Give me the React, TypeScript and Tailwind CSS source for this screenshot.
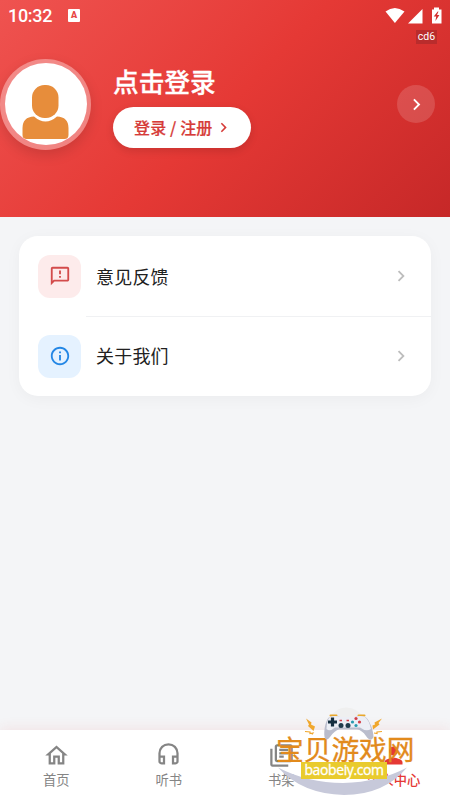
import { useState } from 'react';
import {
  MdChevronRight,
  MdInfoOutline,
  MdOutlineFeedback,
  MdOutlineHeadset,
  MdOutlineHome,
  MdOutlineLibraryBooks,
  MdPerson,
} from 'react-icons/md';

type Tab = '首页' | '听书' | '书架' | '个人中心';

const StatusBar = () => (
  <div className="flex h-8 items-center pl-2 pr-2 font-['Roboto',sans-serif] text-white">
    <span className="text-[18px] leading-none tracking-[-0.3px] font-medium">10:32</span>
    <span className="ml-[16px] mb-[1px] flex h-[13px] w-3 items-center justify-center rounded-[1px] bg-white text-[9px] leading-none font-black text-[#e84545]">
      A
    </span>
    <svg className="ml-auto mb-[3px]" width="57" height="18" viewBox="0 0 57 18" fill="white">
      <path d="M0.500 5.500 Q9.700 -1.500 19.500 5.500 L9.900 17 Z" />
      <path d="M37.500 3V17.500H23Z" />
      <path d="M49 1.500h5v2h2.500v14h-9.500v-14H49Z" />
      <path d="M52.700 5.500l-4 5h2.500l-.8 4.500 4-6h-2.400l1.500-3.500Z" fill="#d32f2f" />
    </svg>
  </div>
);

const Avatar = () => (
  <div className="h-[91px] w-[91px] shrink-0 rounded-full bg-white/35 p-[4.500px] shadow-[0_5px_13px_rgba(0,0,0,0.13)]">
    <div className="h-full w-full overflow-hidden rounded-full bg-white">
      <svg width="82" height="82" viewBox="0 0 82 82" fill="#e78d3b">
        <rect x="27" y="22" width="26.500" height="33" rx="12.500" />
        <path d="M29 53.500Q40.500 63.500 52 53.500Q63.500 54 63.500 65V72Q63.500 76 59.500 76H21.500Q17.500 76 17.500 72V65Q17.500 54 29 53.500Z" />
      </svg>
    </div>
  </div>
);

const Header = () => (
  <header className="h-[217px] bg-[linear-gradient(135deg,#ef5350_0%,#e53935_50%,#c62828_100%)]">
    <StatusBar />
    <div className="flex h-[144px] items-center">
      <Avatar />
      <div className="ml-[22px] mt-[9px] h-[91px]">
        <h1 className="text-[25.700px] leading-[36px] font-medium text-white [-webkit-text-stroke:0.3px_white]">
          点击登录
        </h1>
        <button className="mt-[8px] flex h-[41px] w-[138px] items-center rounded-full bg-white pl-[21px] text-[16px] font-medium text-[#d63b38] shadow-[0_3px_8px_rgba(0,0,0,0.12)] [-webkit-text-stroke:0.2px_#d63b38]">
          <span className="-mt-px whitespace-pre tracking-[0.15px]">登录 / 注册</span>
          <MdChevronRight size={19} className="ml-[1px]" />
        </button>
      </div>
      <button className="ml-auto mr-[15px] flex h-[38px] w-[38px] items-center justify-center rounded-full bg-white/15 text-white">
        <MdChevronRight size={23} />
      </button>
    </div>
  </header>
);

const Menu = () => (
  <div className="mx-[19px] mt-[19px] h-[160px] rounded-[19px] bg-white shadow-[0_3px_16px_rgba(0,0,0,0.04)]">
    <div className="flex h-20 items-center pl-[19px] pr-[19px]">
      <span className="flex h-[43px] w-[43px] items-center justify-center rounded-[12px] bg-[#fdebeb] text-[#d34b4b]">
        <MdOutlineFeedback size={22} />
      </span>
      <span className="ml-[15px] text-[18px] tracking-[0.2px] text-[#212121]">意见反馈</span>
      <MdChevronRight size={22} className="ml-auto text-[#bdbdbd]" />
    </div>
    <div className="ml-[67px] -mb-px h-px bg-[#f0f1f3]" />
    <div className="flex h-20 items-center pl-[19px] pr-[19px]">
      <span className="flex h-[43px] w-[43px] items-center justify-center rounded-[12px] bg-[#e5f2ff] text-[#2487e5]">
        <MdInfoOutline size={22} />
      </span>
      <span className="-mt-px ml-[15px] text-[18px] tracking-[0.2px] text-[#212121]">关于我们</span>
      <MdChevronRight size={22} className="ml-auto text-[#bdbdbd]" />
    </div>
  </div>
);

// Site logo that floats over the tab bar
const SiteLogo = () => (
  <div className="pointer-events-none absolute left-[270px] top-[700px] h-[100px] w-[155px]">
    <div className="absolute left-[6px] top-[31px] whitespace-nowrap text-[27.700px] leading-[34px] text-[#e28a1c] [-webkit-text-stroke:0.3px_#e28a1c]">
      宝贝游戏网
    </div>
    <svg className="absolute inset-0" width="155" height="100" viewBox="0 0 155 100">
      <path d="M60 18Q65 8 76 7.500Q88 8 94 18Z" fill="#efefef" />
      {/* smile */}
      <path d="M8 67.500Q38 83 73 83Q110 82 137 67.500Q114 95 74 95Q32 94 8 67.500Z" fill="#c7c9da" />
      {/* gamepad */}
      <path d="M60.500 15.500h6M88.500 15.500h6" stroke="#e9a82c" strokeWidth="2" strokeLinecap="round" />
      <path
        d="M60 17Q65 15 70 17H85Q90 15 95 17C99 18 104 32 103.500 37Q101 43 96 36Q92 30 87 29.500H69Q65 30 60 37Q56 42 54.500 37C53.500 30 56 18 60 17Z"
        fill="#babdcc"
      />
      <path
        d="M60 17Q65 15 70 17H85Q90 15 95 17Q99 20 101 29Q96 32 90 27.500H65Q60 32 56.500 29Q57 19 60 17Z"
        fill="#eceef5"
      />
      <path d="M62.500 17.500v9M58 22h9" stroke="#152f40" strokeWidth="3.200" />
      <circle cx="71" cy="25.500" r="2.500" fill="#203b4c" />
      <circle cx="78" cy="25.500" r="2.500" fill="#203b4c" />
      <path d="M69.500 20.500h2.500M76.500 20.500h2.500" stroke="#d33f48" strokeWidth="1.300" />
      <circle cx="86" cy="18.500" r="1.600" fill="#d33f48" />
      <circle cx="86" cy="25.500" r="1.600" fill="#299baf" />
      <circle cx="82.500" cy="22" r="1.600" fill="#299baf" />
      <circle cx="89.500" cy="22" r="1.600" fill="#d33f48" />
      {/* sparks */}
      <path d="M36 18.500l5.500 4-.5 2 4 2-1.500 4.500-5.500-5 1-1.500Z" fill="#f0a72d" />
      <path d="M112 18.500l-7.500 4 .5 2-2.500 1 .5 4 6.500-5-1-1.500Z" fill="#f0a72d" />
      <path d="M35 31.500l5 .5v1.500l3-.5-1 1.500" fill="none" stroke="#f0a72d" strokeWidth="1.200" />
      <path d="M112 31.500l-5 .5v1.500l-3-.5" fill="none" stroke="#f0a72d" strokeWidth="1.200" />
    </svg>
    <div className="absolute left-[31px] top-[62px] flex h-[16.500px] w-[86px] items-center justify-center bg-[#e9cb2e] font-['Open_Sans',sans-serif] text-[14px] leading-none font-medium tracking-[-0.4px] text-white [-webkit-text-stroke:0.3px_white]">
      baobeiy.com
    </div>
  </div>
);

const App = () => {
  const [activeTab, setActiveTab] = useState<Tab>('个人中心');

  const tabs = [
    { name: '首页' as Tab, Icon: MdOutlineHome },
    { name: '听书' as Tab, Icon: MdOutlineHeadset },
    { name: '书架' as Tab, Icon: MdOutlineLibraryBooks },
    { name: '个人中心' as Tab, Icon: MdPerson },
  ];

  return (
    <div className="relative flex h-[800px] w-[450px] flex-col overflow-hidden bg-[#f4f5f7] font-['Noto_Sans_CJK_SC',sans-serif]">
      <Header />
      <Menu />
      <nav className="mt-auto flex h-[70px] bg-white shadow-[0_-2px_12px_rgba(229,57,53,0.09)]">
        {tabs.map(({ name, Icon }) => (
          <button
            key={name}
            onClick={() => setActiveTab(name)}
            className={`flex flex-1 flex-col items-center pt-3 text-[13.300px] leading-[21px] ${
              activeTab === name ? 'font-medium text-[#e53935]' : 'text-[#858585]'
            }`}
          >
            <Icon size={27} />
            {name}
          </button>
        ))}
      </nav>
      <span className="absolute right-[13px] top-[30px] h-[14px] w-[21px] bg-[#b92c2c] text-center font-['Roboto',sans-serif] text-[10.500px] leading-[14px] text-white">
        cd6
      </span>
      <SiteLogo />
    </div>
  );
};

export default App;
